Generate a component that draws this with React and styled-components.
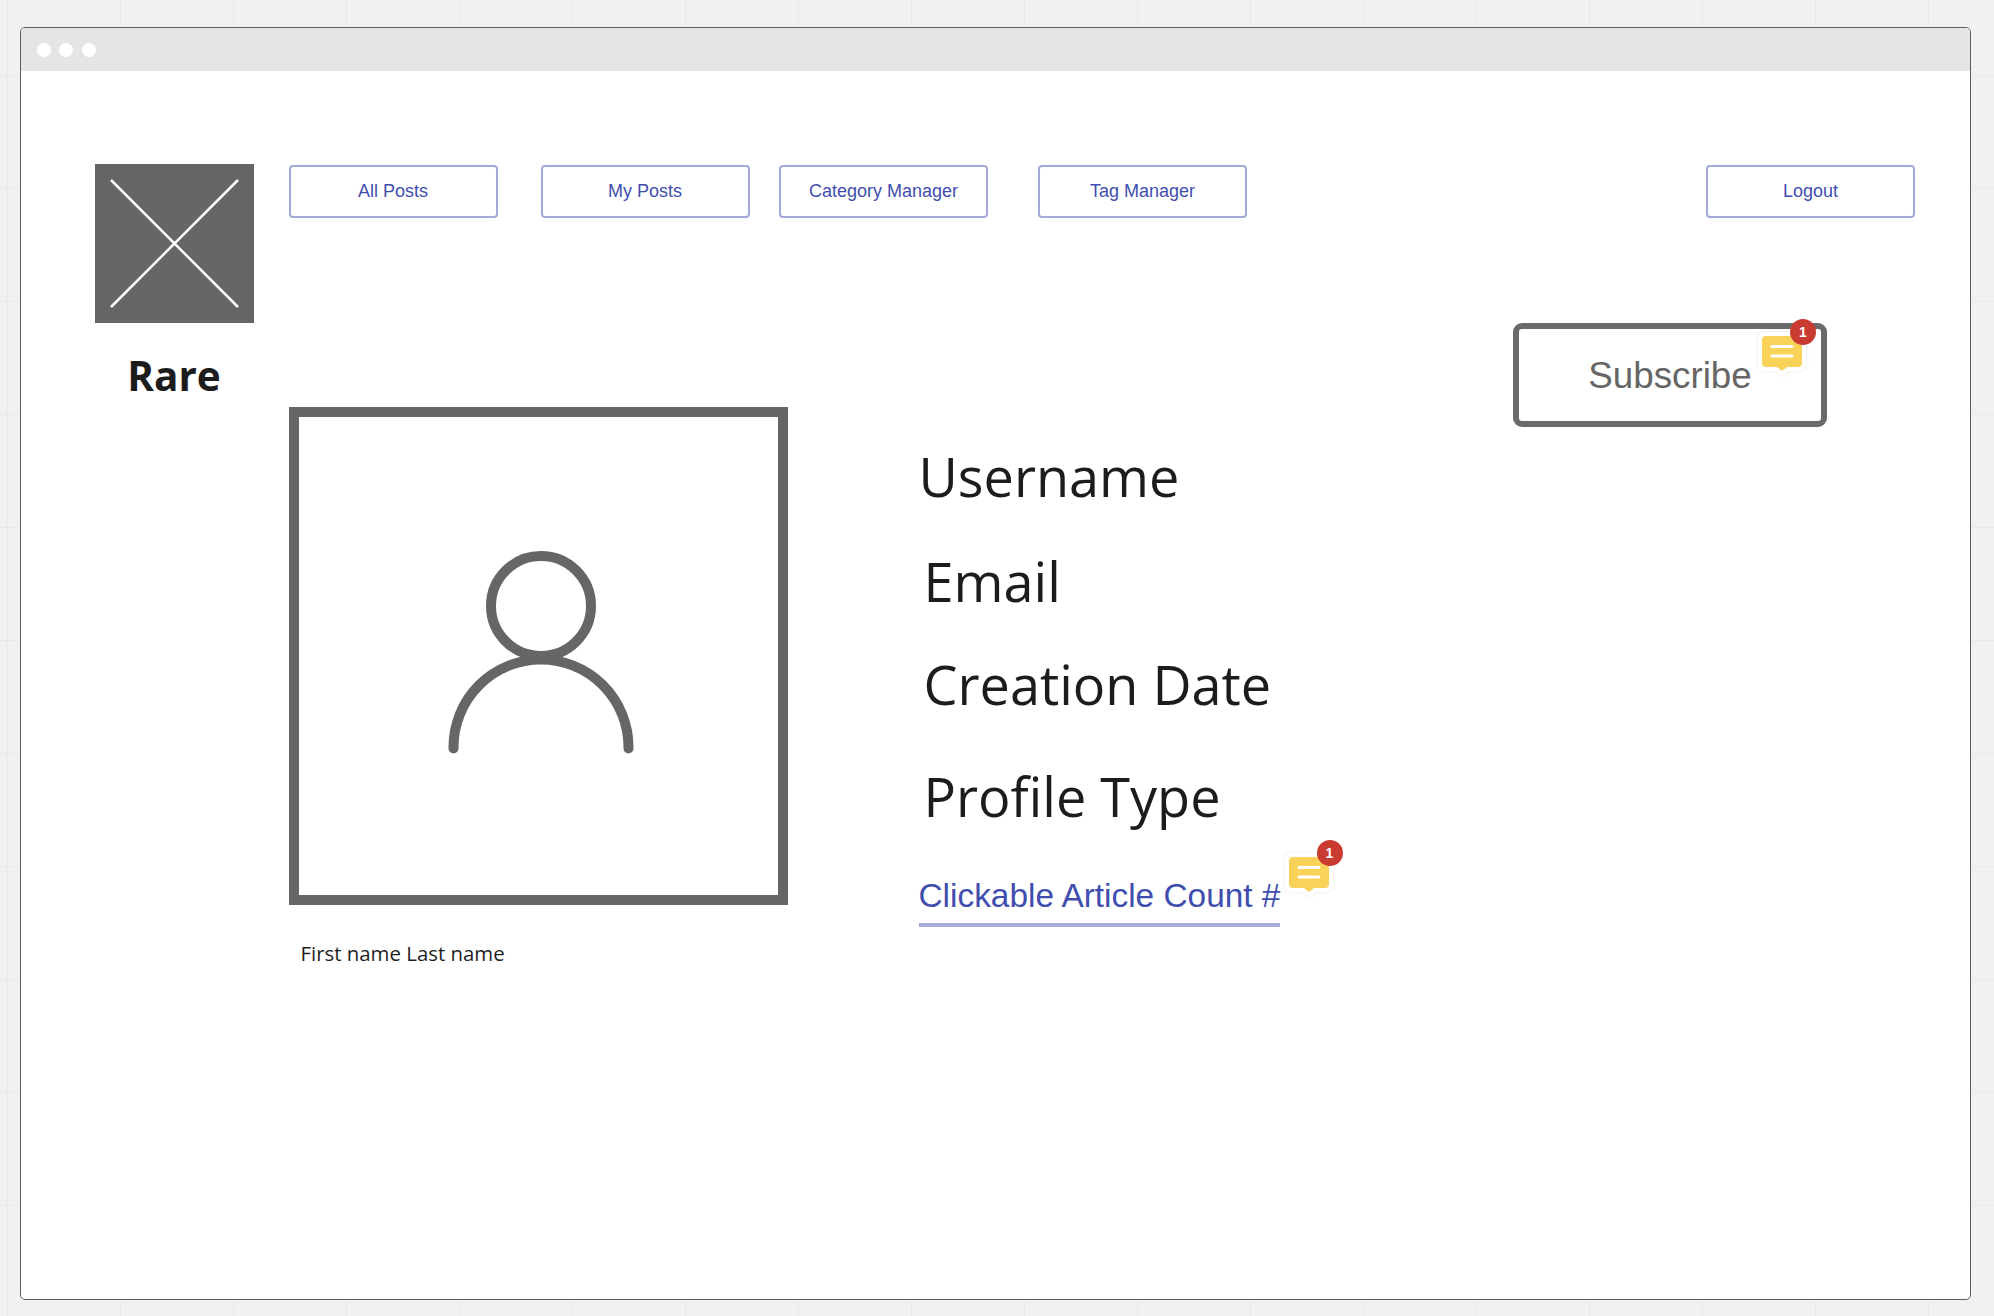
import styled, { createGlobalStyle } from "styled-components";

const GlobalStyle = createGlobalStyle`
  html, body {
    margin: 0;
    padding: 0;
  }
  body {
    height: 1316px;
    overflow: hidden;
    background-color: #f1f1f1;
    background-image:
      linear-gradient(to right, #e9e9e9 1.5px, transparent 1.5px),
      linear-gradient(to bottom, #e9e9e9 1.5px, transparent 1.5px);
    background-size: 113px 113px;
    background-position: 7px 75px;
  }
  * {
    box-sizing: border-box;
  }
`;

const BrowserWindow = styled.div`
  width: 1951px;
  height: 1273px;
  margin: 27px 0 0 20px;
  background: #fff;
  border: 1.5px solid #5c5c5c;
  border-radius: 5px;
  overflow: hidden;
`;

const TitleBar = styled.div`
  height: 43px;
  background: #e5e5e5;
  display: flex;
  align-items: center;
  gap: 8.5px;
  padding: 0 0 0 15.5px;
`;

const Dot = styled.span`
  width: 14px;
  height: 14px;
  border-radius: 50%;
  background: #fff;
`;

const Content = styled.div`
  display: flex;
  gap: 35px;
  padding: 93px 55px 0 73.5px;
`;

const Sidebar = styled.div`
  width: 159px;
  flex-shrink: 0;
  display: flex;
  flex-direction: column;
  align-items: center;
`;

const LogoBox = styled.svg`
  width: 159px;
  height: 159px;
  display: block;
`;

const Brand = styled.div`
  margin-top: 26px;
  font-family: "Open Sans", sans-serif;
  font-weight: 700;
  font-size: 40.5px;
  line-height: 54px;
  color: #1c1c1c;
`;

const Main = styled.div`
  flex: 1;
  min-width: 0;
`;

const NavBar = styled.div`
  display: flex;
  padding-top: 1px;
`;

const NavButton = styled.button`
  width: 209px;
  height: 53px;
  margin-left: ${(p) => p.$gap || 0}px;
  background: #fff;
  border: 2px solid #a3aadb;
  border-radius: 4px;
  color: #3f4eae;
  font-family: "Liberation Sans", Arial, sans-serif;
  font-size: 18px;
  padding: 0 0 1px;
`;

const LogoutButton = styled(NavButton)`
  margin-left: auto;
`;

const ProfileRow = styled.div`
  display: flex;
  align-items: flex-start;
  margin-top: 105px;
`;

const ProfileColumn = styled.div`
  width: 499px;
  flex-shrink: 0;
  padding-top: 84px;
`;

const AvatarFrame = styled.div`
  width: 499px;
  height: 498px;
  border: 10px solid #666;
  display: flex;
  align-items: center;
  justify-content: center;
`;

const AvatarIcon = styled.svg`
  display: block;
  width: 198px;
  height: 216px;
  margin: 0 0 0 5px;
  transform: translateY(-1px);
  fill: none;
  stroke: #666;
  stroke-width: 10;
  stroke-linecap: round;
`;

const FullName = styled.div`
  margin: 32px 0 0 12px;
  font-family: "Open Sans", sans-serif;
  font-size: 20.4px;
  line-height: 32px;
  color: #1f1f1f;
`;

const DetailsColumn = styled.div`
  margin-left: 131px;
  padding-top: 117px;
  display: flex;
  flex-direction: column;
  align-items: flex-start;
`;

const Field = styled.div`
  margin: ${(p) => p.$top || 0}px 0 0 ${(p) => p.$indent || 0}px;
  font-family: "Open Sans", sans-serif;
  font-size: 54px;
  line-height: 72px;
  color: #1c1c1c;
`;

const ArticleLink = styled.a`
  position: relative;
  display: block;
  margin-top: 44px;
  font-family: "Liberation Sans", Arial, sans-serif;
  font-size: 33.4px;
  line-height: 40px;
  padding-bottom: 7px;
  color: #3f4eae;
  border-bottom: 4px solid #a6acd9;
  white-space: nowrap;
`;

const SubscribeButton = styled.button`
  position: relative;
  width: 314px;
  height: 104px;
  margin: 0 88px 0 auto;
  flex-shrink: 0;
  background: #fff;
  border: 6px solid #6a6a6a;
  border-radius: 9px;
  color: #666;
  font-family: "Liberation Sans", Arial, sans-serif;
  font-size: 36.8px;
  padding: 2px 0 0;
`;

const NoteWrap = styled.span`
  position: absolute;
  left: ${(p) => p.$left}px;
  top: ${(p) => p.$top}px;
  width: 62px;
  height: 60px;
  display: block;
`;

const NoteIcon = styled.svg`
  position: absolute;
  left: 0;
  top: 12px;
  width: 50px;
  height: 46px;
  filter: drop-shadow(0 0 2px rgba(0, 0, 0, 0.08));
`;

const CountBadge = styled.span`
  position: absolute;
  left: 33px;
  top: 0;
  width: 26px;
  height: 26px;
  border-radius: 50%;
  background: #c93a31;
  color: #fff;
  font-family: "Liberation Sans", Arial, sans-serif;
  font-weight: 700;
  font-size: 14px;
  line-height: 26px;
  text-align: center;
`;

const NoteBadge = ({ left, top }) => (
  <NoteWrap $left={left} $top={top}>
    <NoteIcon viewBox="0 0 50 46">
      <path
        d="M9 1h32a8 8 0 0 1 8 8v23a8 8 0 0 1-8 8h-10l-6 5-6-5H9a8 8 0 0 1-8-8V9a8 8 0 0 1 8-8z"
        fill="#fff"
      />
      <path
        d="M9 5h32a4 4 0 0 1 4 4v23a4 4 0 0 1-4 4H30l-5 4-5-4H9a4 4 0 0 1-4-4V9a4 4 0 0 1 4-4z"
        fill="#f9d259"
      />
      <path d="M15 15.500h20M15 25h20" stroke="#fff" strokeWidth="3" strokeLinecap="round" />
    </NoteIcon>
    <CountBadge>1</CountBadge>
  </NoteWrap>
);

const App = () => {
  return (
    <>
      <GlobalStyle />
      <BrowserWindow>
        <TitleBar>
          <Dot />
          <Dot />
          <Dot />
        </TitleBar>
        <Content>
          <Sidebar>
            <LogoBox viewBox="0 0 159 159">
              <rect width="159" height="159" fill="#666" />
              <path d="M16 16L143 143M143 16L16 143" stroke="#fff" strokeWidth="2.5" />
            </LogoBox>
            <Brand>Rare</Brand>
          </Sidebar>
          <Main>
            <NavBar>
              <NavButton>All Posts</NavButton>
              <NavButton $gap={43}>My Posts</NavButton>
              <NavButton $gap={29.5}>Category Manager</NavButton>
              <NavButton $gap={50}>Tag Manager</NavButton>
              <LogoutButton>Logout</LogoutButton>
            </NavBar>
            <ProfileRow>
              <ProfileColumn>
                <AvatarFrame>
                  <AvatarIcon viewBox="0 0 198 216">
                    <circle cx="99" cy="59" r="50" />
                    <path d="M11.500 201.500V200A87.500 87.500 0 0 1 186.500 200V201.500" />
                  </AvatarIcon>
                </AvatarFrame>
                <FullName>First name Last name</FullName>
              </ProfileColumn>
              <DetailsColumn>
                <Field>Username</Field>
                <Field $indent={5} $top={33}>Email</Field>
                <Field $indent={5} $top={31}>Creation Date</Field>
                <Field $indent={5} $top={40}>Profile Type</Field>
                <ArticleLink>
                  Clickable Article Count #
                  <NoteBadge left={365} top={-36} />
                </ArticleLink>
              </DetailsColumn>
              <SubscribeButton>
                Subscribe
                <NoteBadge left={238} top={-10} />
              </SubscribeButton>
            </ProfileRow>
          </Main>
        </Content>
      </BrowserWindow>
    </>
  );
};

export default App;
